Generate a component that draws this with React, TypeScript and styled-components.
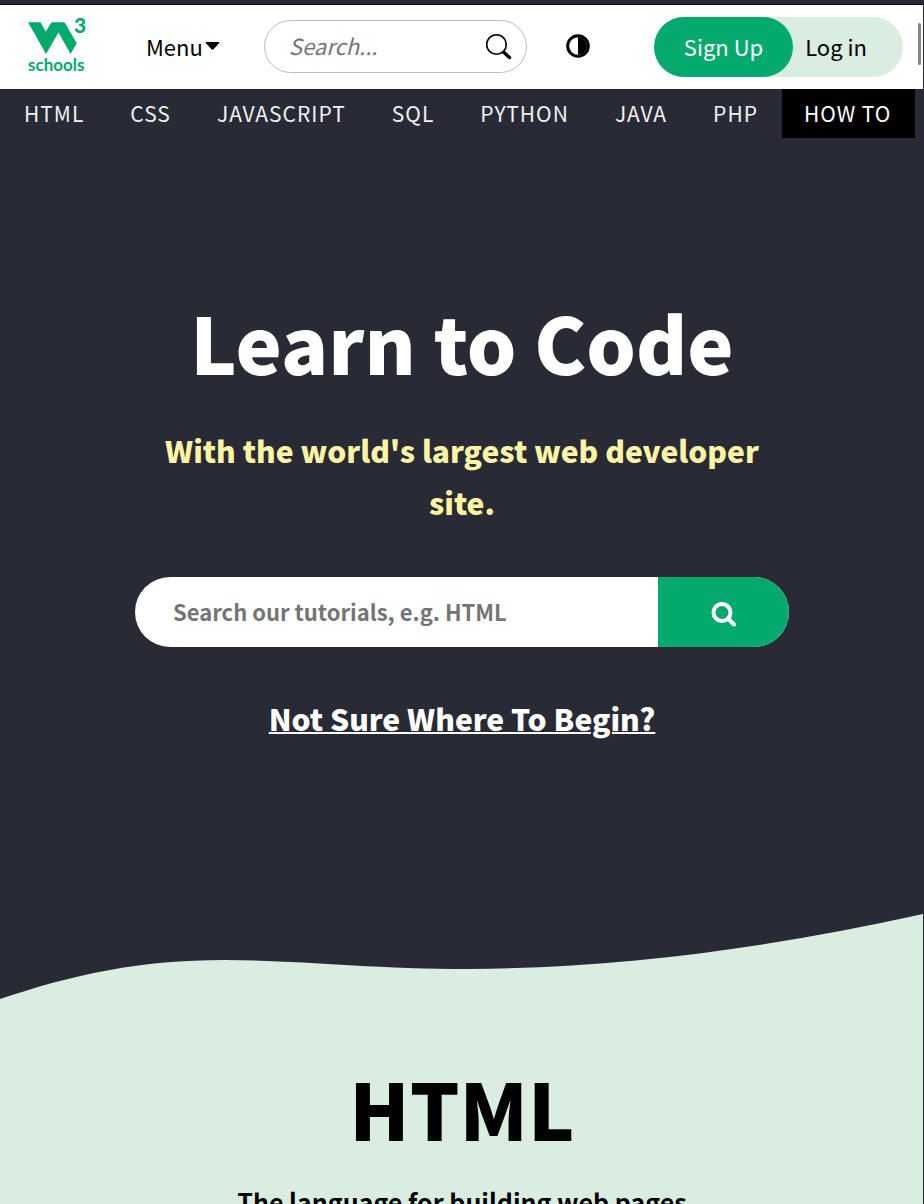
import React from "react";
import styled, { createGlobalStyle } from "styled-components";

const GlobalStyle = createGlobalStyle`
  *, *::before, *::after { box-sizing: border-box; }
  html { background: #d9eee1; }
  body {
    margin: 0;
    background: #d9eee1;
    color: #000;
    font-family: "Noto Sans CJK SC", "Noto Sans", sans-serif;
    scrollbar-width: none;
  }
  body::-webkit-scrollbar { display: none; }
  button, input { font-family: inherit; margin: 0; }
`;

const Page = styled.div`
  min-height: 100vh;
  border-right: 1px solid #282a35;
`;

const TopStrip = styled.div`
  height: 5px;
  background: #2b2833;
  border-bottom: 1px solid #0c0b10;
`;

const Header = styled.header`
  display: flex;
  align-items: center;
  height: 84px;
  padding: 0 20px 0 28px;
  background: #fff;
`;

const LogoLink = styled.a`
  display: block;
  height: 60px;
  margin-right: 58px;
`;

const MenuButton = styled.button`
  display: flex;
  align-items: center;
  gap: 2px;
  margin-bottom: 2px;
  padding: 0;
  border: 0;
  background: none;
  color: #000;
  font-size: 22px;
  line-height: 32px;
`;

const SearchForm = styled.form`
  display: flex;
  align-items: center;
  width: 263px;
  height: 53px;
  margin: 0 38px 2px 44px;
  padding: 0 14px 2px 24px;
  border: 1px solid #bbb;
  border-radius: 27px;
`;

const SearchInput = styled.input`
  flex: 1;
  min-width: 0;
  padding: 0;
  border: 0;
  outline: 0;
  background: none;
  font-size: 22px;
  line-height: 32px;
  font-style: italic;
  &::placeholder { color: #757575; opacity: 1; }
`;

const IconButton = styled.button`
  display: flex;
  padding: 0;
  border: 0;
  background: none;
  color: #000;
`;

const AuthGroup = styled.div`
  display: flex;
  height: 60px;
  margin-left: auto;
  border-radius: 30px;
  background: #d9eee1;
`;

const AuthLink = styled.a<{ $primary?: boolean }>`
  display: flex;
  align-items: center;
  padding: ${(p) => (p.$primary ? "0 30px 2px" : "0 36px 2px 12px")};
  border-radius: 30px;
  background: ${(p) => (p.$primary ? "#04aa6d" : "transparent")};
  color: ${(p) => (p.$primary ? "#fff" : "#000")};
  font-size: 22px;
  line-height: 32px;
  text-decoration: none;
`;

const TopicNav = styled.nav`
  display: flex;
  height: 49px;
  padding-left: 2px;
  background: #282a35;
`;

const TopicLink = styled.a<{ $active?: boolean }>`
  display: flex;
  align-items: center;
  padding: 0 24px 2px 22px;
  background: ${(p) => (p.$active ? "#000" : "transparent")};
  color: ${(p) => (p.$active ? "#fff" : "#f1f1f1")};
  font-size: 21px;
  line-height: 32px;
  letter-spacing: 1px;
  text-decoration: none;
  white-space: nowrap;
`;

const Hero = styled.main`
  display: flex;
  flex-direction: column;
  align-items: center;
  padding: 143px 20px 170px 21px;
  background: #282a35;
  text-align: center;
`;

const Title = styled.h1`
  margin: 0;
  color: #fff;
  font-size: 78px;
  line-height: 120px;
  font-weight: 900;
`;

const Subtitle = styled.h2`
  max-width: 654px;
  margin: 23px 0 49px;
  color: #fff4a3;
  font-size: 30px;
  line-height: 52px;
  font-weight: 900;
`;

const TutorialForm = styled.form`
  display: flex;
  width: 100%;
  max-width: 654px;
  height: 70px;
  border-radius: 35px;
  background: #fff;
  overflow: hidden;
`;

const TutorialInput = styled.input`
  flex: 1;
  min-width: 0;
  padding: 0 0 2px 38px;
  border: 0;
  outline: 0;
  background: none;
  font-size: 22px;
  line-height: 36px;
  font-weight: 600;
  &::placeholder { color: #757575; opacity: 1; }
`;

const TutorialSubmit = styled.button`
  display: flex;
  align-items: center;
  justify-content: center;
  width: 131px;
  padding: 3px 0 0;
  border: 0;
  background: #04aa6d;
`;

const BeginLink = styled.a`
  margin-top: 45px;
  color: #fff;
  font-size: 30px;
  line-height: 52px;
  font-weight: 900;
  text-decoration: underline;
  text-decoration-thickness: 2px;
`;

const Wave = styled.svg`
  display: block;
  width: 100%;
  height: 86px;
  background: #282a35;
`;

const Lesson = styled.section`
  padding: 47px 20px 0 21px;
  background: #d9eee1;
  text-align: center;
`;

const LessonTitle = styled.h2`
  margin: 0;
  font-size: 78px;
  line-height: 120px;
  font-weight: 900;
`;

const LessonText = styled.p`
  margin: 14px 0 0;
  font-size: 25px;
  line-height: 40px;
  font-weight: 600;
`;

const ScrollThumb = styled.div`
  position: fixed;
  top: 23px;
  right: 3px;
  width: 3px;
  height: 42px;
  border-radius: 2px;
  background: #858585;
`;

const topics = ["HTML", "CSS", "JAVASCRIPT", "SQL", "PYTHON", "JAVA", "PHP", "HOW TO"];

const Logo = () => (
  <svg width="60" height="60" viewBox="0 0 60 60" fill="#04aa6d" overflow="visible" aria-hidden="true">
    <path d="M0 5.300H12.500L17.800 14.500L23.500 5.300H36.500L48.800 26.300L42.500 37L30.500 15.500L18 37Z" />
    <text x="46" y="16" fontFamily="Lato" fontWeight="900" fontSize="21">3</text>
    <text x="0" y="54" fontFamily="Lato" fontWeight="700" fontSize="17">schools</text>
  </svg>
);

export default function App() {
  return (
    <Page>
      <GlobalStyle />
      <TopStrip />
      <Header>
        <LogoLink href="#home" aria-label="Home"><Logo /></LogoLink>
        <MenuButton type="button">
          Menu
          <svg width="15" height="8" viewBox="0 0 15 8" aria-hidden="true">
            <path d="M1.300 0H13.700Q15 0 14 1.200L8.500 7.300Q7.500 8.200 6.500 7.300L1 1.200Q0 0 1.300 0Z" />
          </svg>
        </MenuButton>
        <SearchForm role="search">
          <SearchInput type="text" placeholder="Search..." aria-label="Search" />
          <IconButton type="submit" aria-label="Submit search">
            <svg width="28" height="30" viewBox="0 0 28 30" fill="none" stroke="#000">
              <circle cx="12.500" cy="14.500" r="9.800" strokeWidth="1.600" />
              <path d="M20 22.500L25.500 27.500" strokeWidth="3.400" strokeLinecap="round" />
              <path d="M19 21L21 23" strokeWidth="2" />
            </svg>
          </IconButton>
        </SearchForm>
        <IconButton type="button" aria-label="Toggle contrast">
          <svg width="26" height="28" viewBox="0 0 26 28">
            <circle cx="13" cy="13" r="10.300" fill="#fff" stroke="#000" strokeWidth="3" />
            <path d="M13 4A9 9 0 0 1 13 22Z" />
          </svg>
        </IconButton>
        <AuthGroup>
          <AuthLink href="#signup" $primary>Sign Up</AuthLink>
          <AuthLink href="#login">Log in</AuthLink>
        </AuthGroup>
      </Header>
      <TopicNav>
        {topics.map((t) => (
          <TopicLink key={t} href={"#" + t.toLowerCase().replace(" ", "")} $active={t === "HOW TO"}>{t}</TopicLink>
        ))}
      </TopicNav>
      <Hero>
        <Title>Learn to Code</Title>
        <Subtitle>With the world's largest web developer site.</Subtitle>
        <TutorialForm>
          <TutorialInput type="text" placeholder="Search our tutorials, e.g. HTML" aria-label="Search our tutorials" />
          <TutorialSubmit type="submit" aria-label="Search tutorials">
            <svg width="26" height="26" viewBox="0 0 26 26" fill="none" stroke="#fff" strokeWidth="4">
              <circle cx="11" cy="11.500" r="8.500" />
              <path d="M17.500 18L23 23.500" strokeLinecap="round" />
            </svg>
          </TutorialSubmit>
        </TutorialForm>
        <BeginLink href="#where-to-start">Not Sure Where To Begin?</BeginLink>
      </Hero>
      <Wave viewBox="0 0 924 86" preserveAspectRatio="none" aria-hidden="true">
        <path fill="#d9eee1" d="M0 86V85C75 60 140 46 225 46C300 46 370 55 470 55C620 54 765 35 924 0V86Z" />
      </Wave>
      <Lesson>
        <LessonTitle>HTML</LessonTitle>
        <LessonText>The language for building web pages</LessonText>
      </Lesson>
      <ScrollThumb />
    </Page>
  );
}
